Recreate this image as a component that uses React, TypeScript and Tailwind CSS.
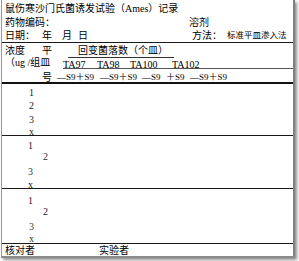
import React from "react";

type Line = { text: string; h: string; indent: string; color: string };

const groups: { h: string; pt: string; lines: Line[] }[] = [
    {
        h: "h-[52px]",
        pt: "pt-[2px]",
        lines: [
            { text: "1", h: "h-[13px]", indent: "pl-[27px]", color: "text-[#1a1a2a]" },
            { text: "2", h: "h-[14px]", indent: "pl-[27px]", color: "text-[#222]" },
            { text: "3", h: "h-[12px]", indent: "pl-[27px]", color: "text-[#1f2f2a]" },
            { text: "x", h: "h-[11px]", indent: "pl-[27px]", color: "text-[#1a2a1a]" },
        ],
    },
    {
        h: "h-[53px]",
        pt: "pt-[3px]",
        lines: [
            { text: "1", h: "h-[11px]", indent: "pl-[26px]", color: "text-[#1a1a3a]" },
            { text: "2", h: "h-[15px]", indent: "pl-[41px]", color: "text-[#333]" },
            { text: "3", h: "h-[13px]", indent: "pl-[26px]", color: "text-[#1f3a32]" },
            { text: "x", h: "h-[10px]", indent: "pl-[26px]", color: "text-[#111]" },
        ],
    },
    {
        h: "h-[55px]",
        pt: "pt-[5px]",
        lines: [
            { text: "1", h: "h-[11px]", indent: "pl-[26px]", color: "text-[#4a1030]" },
            { text: "2", h: "h-[15px]", indent: "pl-[41px]", color: "text-[#222]" },
            { text: "3", h: "h-[12px]", indent: "pl-[27px]", color: "text-[#1f4a42]" },
            { text: "x", h: "h-[10px]", indent: "pl-[27px]", color: "text-[#1a3a1a]" },
        ],
    },
];

const App = () => {
    return (
        <div className="w-[299px] h-[261px] bg-white overflow-hidden">
            <div className="ml-px w-[294px] h-[258px] bg-white border-l border-l-[#9a9a9a] border-r-2 border-r-[#808080] border-b-2 border-b-[#8a8a8a] shadow-[2px_2px_3px_rgba(0,0,0,0.45)] flex flex-col text-[10px] leading-[13px] text-black whitespace-nowrap font-['Liberation_Serif','Noto_Sans_CJK_SC',serif]">
                <div className="h-[16px] pt-[2px] pl-[3px] shrink-0">鼠伤寒沙门氏菌诱发试验（Ames）记录</div>

                <div className="h-[13px] flex shrink-0">
                    <span className="w-[187px] shrink-0 pl-[3px]">药物编码：</span>
                    <span>溶剂</span>
                </div>

                <div className="h-[14px] flex shrink-0 border-b border-[#1a1a1a]">
                    <span className="w-[40px] shrink-0 pl-[3px]">日期：</span>
                    <span className="w-[20px] shrink-0">年</span>
                    <span className="w-[16px] shrink-0">月</span>
                    <span className="w-[114px] shrink-0">日</span>
                    <span className="w-[35px] shrink-0">方法：</span>
                    <span className="text-[8.5px]">标准平皿渗入法</span>
                </div>

                <div className="h-[15px] flex shrink-0 pt-[1px]">
                    <span className="w-[40px] shrink-0 pl-[3px]">浓度</span>
                    <span className="w-[26px] shrink-0">平</span>
                    <span className="h-full pl-[10px] pr-[6px] border-b border-[#333]">回变菌落数（个皿）</span>
                </div>

                <div className="h-[11px] flex shrink-0 leading-[10px]">
                    <span className="w-[61px] shrink-0 pl-[3px]">（ug /组皿</span>
                    <div className="flex-1 flex border-b border-[#555] pt-[2px]">
                        <span className="w-[34px] shrink-0">TA97</span>
                        <span className="w-[33px] shrink-0">TA98</span>
                        <span className="w-[42px] shrink-0">TA100</span>
                        <span>TA102</span>
                    </div>
                </div>

                <div className="h-[15px] flex shrink-0 pt-[2px] border-b-2 border-[#111] text-[9px]">
                    <span className="w-[55px] shrink-0 pl-[40px] text-[10px]">号</span>
                    <span className="w-[43px] shrink-0">—S9＋S9</span>
                    <span className="w-[42px] shrink-0">—S9＋S9</span>
                    <span className="w-[24px] shrink-0">—S9</span>
                    <span className="w-[24px] shrink-0">＋S9</span>
                    <span>—S9＋S9</span>
                </div>

                {groups.map((g, i) => (
                    <div key={i} className={`${g.h} ${g.pt} shrink-0 flex flex-col border-b border-[#1a1a1a]`}>
                        {g.lines.map((l, j) => (
                            <span key={j} className={`${l.h} ${l.indent} ${l.color} shrink-0`}>{l.text}</span>
                        ))}
                    </div>
                ))}

                <div className="flex-1 flex leading-[11px] pt-px">
                    <span className="w-[97px] shrink-0 pl-[3px]">核对者</span>
                    <span>实验者</span>
                </div>
            </div>
        </div>
    );
};

export default App;
